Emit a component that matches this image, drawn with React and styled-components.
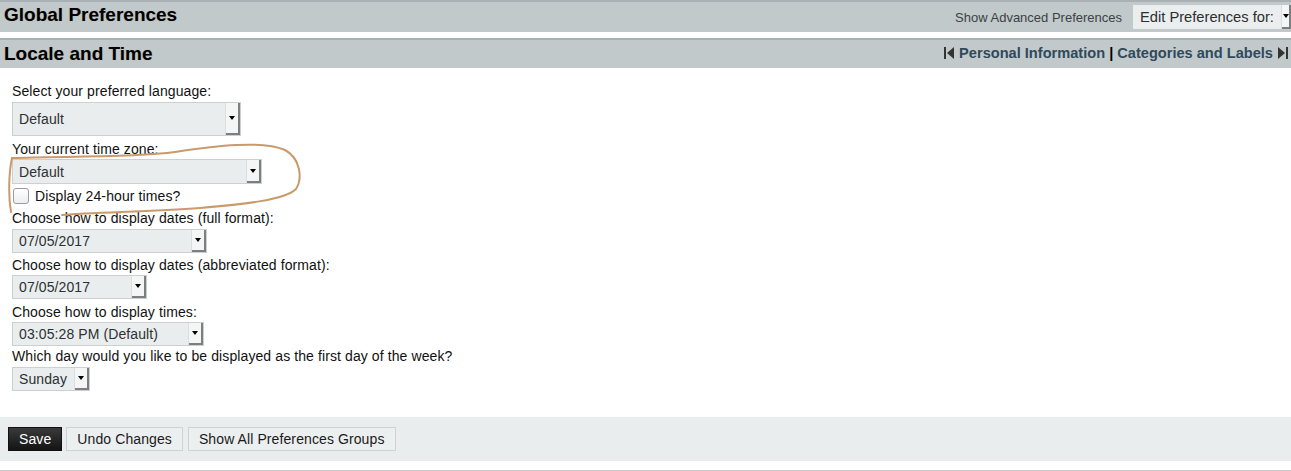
import React from 'react'
import styled, { createGlobalStyle } from 'styled-components'

const GlobalStyle = createGlobalStyle`
    html, body {
        margin: 0;
        padding: 0;
        background: #fff;
        overflow: hidden;
    }
    body {
        font-family: 'Liberation Sans', Arial, sans-serif;
        color: #111;
    }
`

const Page = styled.div`
    position: relative;
    width: 1291px;
    height: 471px;
`

const Bar = styled.div`
    display: flex;
    align-items: center;
    justify-content: space-between;
    height: ${(p) => p.$height}px;
    margin-top: ${(p) => p.$top || 0}px;
    background: #c2c9cb;
    border-top: 2px solid #a9b1b4;
    box-sizing: border-box;
    padding-left: 4px;
`

const Title = styled.h1`
    margin: 0 0 ${(p) => p.$lift || 0}px;
    font-size: 19px;
    font-weight: bold;
    color: #000;
    text-shadow: 0 0 1px rgba(90, 60, 0, 0.25);
`

const BarRight = styled.div`
    display: flex;
    align-items: center;
    height: 100%;
`

const AdvancedLink = styled.span`
    font-size: 13px;
    color: #3a4145;
    margin-right: 11px;
`

const EditSelect = styled.div`
    display: flex;
    align-items: stretch;
    width: 158px;
    height: 24px;
    background: #eaeeee;
    font-size: 14.7px;
    color: #2b2f31;
    padding-left: 7px;
    box-sizing: border-box;
`

const EditText = styled.span`
    flex: 1;
    display: flex;
    align-items: center;
    white-space: nowrap;
`

const Nav = styled.div`
    display: flex;
    align-items: center;
    gap: 5px;
    padding-right: 3px;
    margin-bottom: 3px;
    font-size: 14.6px;
    font-weight: bold;
    color: #2f4a5b;
    white-space: nowrap;
`

const Sep = styled.span`
    color: #000;
`

const Form = styled.div`
    padding: 0 12px;
    display: flex;
    flex-direction: column;
    align-items: flex-start;
    padding-top: 14px;
`

const Label = styled.div`
    font-size: 14px;
    letter-spacing: 0.1px;
    line-height: 16px;
    color: #111;
    margin-top: ${(p) => p.$top || 0}px;
`

const Select = styled.div`
    display: flex;
    align-items: stretch;
    width: ${(p) => p.$width}px;
    height: ${(p) => p.$height || 24}px;
    margin-top: ${(p) => p.$top || 2}px;
    background: #eaeded;
    border: 1px solid #cdd0d0;
    box-sizing: border-box;
`

const SelectText = styled.div`
    flex: 1;
    display: flex;
    align-items: center;
    padding-left: 6px;
    font-size: 14px;
    letter-spacing: 0.1px;
    color: #2c3133;
    white-space: nowrap;
`

const ArrowButton = styled.div`
    width: ${(p) => p.$w || 12}px;
    display: flex;
    align-items: center;
    justify-content: center;
    background: #f4f5f5;
    border-left: 1px solid #dcdede;
    box-shadow: inset -2px -2px 0 #7c7f80;
    &::after {
        content: '';
        display: block;
        border-left: 3px solid transparent;
        border-right: 3px solid transparent;
        border-top: 4px solid #000;
        margin: 0 2px 2px 0;
    }
`

const CheckRow = styled.label`
    display: flex;
    align-items: center;
    gap: 6px;
    margin-top: 4px;
    font-size: 14px;
    letter-spacing: 0.1px;
    color: #111;
`

const Check = styled.span`
    width: 14px;
    height: 14px;
    border: 1px solid #9a9d9f;
    border-radius: 3px;
    background: linear-gradient(#fff, #eceeef);
    margin-left: 1px;
`

const Footer = styled.div`
    display: flex;
    gap: 4px;
    margin-top: 26px;
    padding: 10px 8px;
    background: #e9eded;
`

const Button = styled.button`
    height: 24px;
    padding: 0 10px;
    font-family: 'Liberation Sans', Arial, sans-serif;
    font-size: 14px;
    letter-spacing: 0.1px;
    color: ${(p) => (p.$primary ? '#fff' : '#1a1a1a')};
    background: ${(p) =>
        p.$primary ? 'linear-gradient(#3a3a3a, #141414)' : '#eceff0'};
    border: 1px solid ${(p) => (p.$primary ? '#111' : '#cfd2d3')};
    border-radius: 0;
    margin-left: ${(p) => p.$gap || 0}px;
`

const BottomLine = styled.div`
    margin-top: 9px;
    border-top: 2px solid #cacaca;
`

const Annotation = styled.svg`
    position: absolute;
    left: 0;
    top: 0;
    pointer-events: none;
`

const FirstIcon = () => (
    <svg width="10" height="14" viewBox="0 0 10 14">
        <rect x="0" y="1" width="2" height="12" fill="#333" />
        <path d="M10 1 L3 7 L10 13 Z" fill="#333" />
    </svg>
)

const LastIcon = () => (
    <svg width="10" height="14" viewBox="0 0 10 14">
        <path d="M0 1 L7 7 L0 13 Z" fill="#333" />
        <rect x="8" y="1" width="2" height="12" fill="#333" />
    </svg>
)

const Dropdown = ({ value, width, height, top }) => (
    <Select $width={width} $height={height} $top={top}>
        <SelectText>{value}</SelectText>
        <ArrowButton $w={14} />
    </Select>
)

export default function App() {
    return (
        <Page>
            <GlobalStyle />
            <Bar $height={32}>
                <Title $lift={4}>Global Preferences</Title>
                <BarRight>
                    <AdvancedLink>Show Advanced Preferences</AdvancedLink>
                    <EditSelect>
                        <EditText>Edit Preferences for:</EditText>
                        <ArrowButton $w={9} />
                    </EditSelect>
                </BarRight>
            </Bar>
            <Bar $height={30} $top={6}>
                <Title>Locale and Time</Title>
                <Nav>
                    <FirstIcon />
                    <span>
                        Personal Information <Sep>|</Sep> Categories and Labels
                    </span>
                    <LastIcon />
                </Nav>
            </Bar>
            <Form>
                <Label $top={1}>Select your preferred language:</Label>
                <Dropdown value="Default" width={229} height={34} top={3} />
                <Label $top={5}>Your current time zone:</Label>
                <Dropdown value="Default" width={250} height={25} top={2} />
                <CheckRow>
                    <Check />
                    Display 24-hour times?
                </CheckRow>
                <Label $top={6}>Choose how to display dates (full format):</Label>
                <Dropdown value="07/05/2017" width={195} height={24} top={3} />
                <Label $top={4}>Choose how to display dates (abbreviated format):</Label>
                <Dropdown value="07/05/2017" width={135} height={24} top={2} />
                <Label $top={5}>Choose how to display times:</Label>
                <Dropdown value="03:05:28 PM (Default)" width={192} height={24} top={2} />
                <Label $top={2}>Which day would you like to be displayed as the first day of the week?</Label>
                <Dropdown value="Sunday" width={78} height={24} top={3} />
            </Form>
            <Footer>
                <Button $primary>Save</Button>
                <Button>Undo Changes</Button>
                <Button $gap={1}>Show All Preferences Groups</Button>
            </Footer>
            <BottomLine />
            <Annotation width="320" height="230" viewBox="0 0 320 230">
                <path
                    d="M11 212 C 8 195 9 172 12 158 C 60 156 130 158 175 152 C 215 146 262 140 285 150 C 300 158 303 178 296 189 C 285 200 245 204 200 208 C 150 212 95 212 62 215"
                    fill="none"
                    stroke="#c99a6c"
                    strokeWidth="2"
                    strokeLinecap="round"
                />
            </Annotation>
        </Page>
    )
}
